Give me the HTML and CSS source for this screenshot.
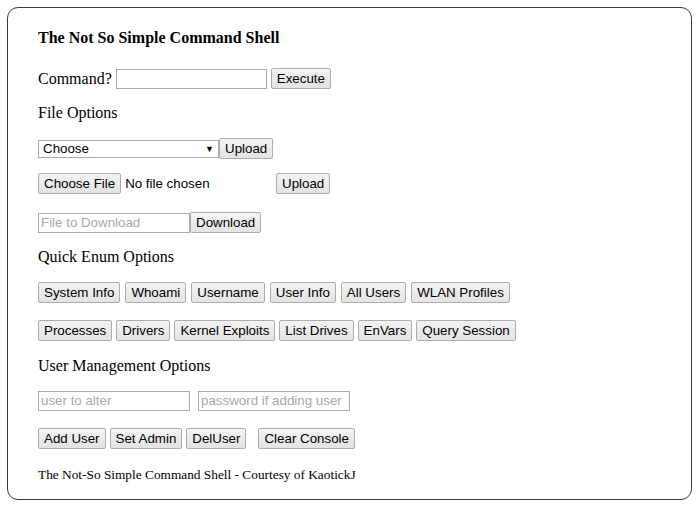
FILE: index.html
```html
<!DOCTYPE html>
<html>
<head>
<meta charset="utf-8">
<link rel="stylesheet" href="styles.css">
</head>
<body>
<div class="shell">
  <div class="title">The Not So Simple Command Shell</div>

  <div class="row r-command">
    <span class="label">Command?</span>
    <input class="field" type="text">
    <button class="btn">Execute</button>
  </div>

  <div class="heading h-file">File Options</div>

  <div class="row tight r-select">
    <div class="select"><span>Choose</span><span class="arrow">&#9660;</span></div>
    <button class="btn">Upload</button>
  </div>

  <div class="row r-choose">
    <div class="file"><button class="btn">Choose File</button><span class="nofile">No file chosen</span></div>
    <button class="btn">Upload</button>
  </div>

  <div class="row tight r-download">
    <input class="field" type="text" placeholder="File to Download">
    <button class="btn">Download</button>
  </div>

  <div class="heading h-enum">Quick Enum Options</div>

  <div class="row r-enum1">
    <button class="btn">System Info</button>
    <button class="btn">Whoami</button>
    <button class="btn">Username</button>
    <button class="btn">User Info</button>
    <button class="btn">All Users</button>
    <button class="btn">WLAN Profiles</button>
  </div>

  <div class="row r-enum2">
    <button class="btn">Processes</button>
    <button class="btn">Drivers</button>
    <button class="btn">Kernel Exploits</button>
    <button class="btn">List Drives</button>
    <button class="btn">EnVars</button>
    <button class="btn">Query Session</button>
  </div>

  <div class="heading h-user">User Management Options</div>

  <div class="row wide r-userin">
    <input class="field" type="text" placeholder="user to alter">
    <input class="field" type="text" placeholder="password if adding user">
  </div>

  <div class="row r-userbtn">
    <button class="btn">Add User</button>
    <button class="btn">Set Admin</button>
    <button class="btn">DelUser</button>
    <button class="btn clear">Clear Console</button>
  </div>

  <div class="footer">The Not-So Simple Command Shell - Courtesy of KaotickJ</div>
</div>
</body>
</html>
```
FILE: styles.css
```css
html, body {
  margin: 0;
  padding: 0;
  background: #ffffff;
}
body {
  padding: 7px;
  font-family: "Liberation Serif", "Times New Roman", serif;
  color: #000;
}
.shell {
  box-sizing: border-box;
  width: 685px;
  height: 493px;
  border: 1px solid #3a3a3a;
  border-radius: 11px;
  padding: 21px 30px 0 30px;
  display: flex;
  flex-direction: column;
  align-items: flex-start;
}
.title {
  font-size: 16px;
  font-weight: bold;
  line-height: 18px;
}
.heading {
  font-size: 16px;
  line-height: 18px;
}
.label {
  font-size: 16px;
  line-height: 18px;
}
.row {
  display: flex;
  align-items: center;
  gap: 4px;
  height: 21px;
}
.row.tight { gap: 0; }
.row.wide { gap: 8px; }
.r-enum1 { gap: 5px; }

.btn {
  box-sizing: border-box;
  height: 21px;
  margin: 0;
  padding: 0 5px;
  font-family: "Liberation Sans", Arial, sans-serif;
  font-size: 13.33px;
  line-height: 15px;
  color: #000;
  background: linear-gradient(#f3f3f3, #e3e3e3);
  border: 1px solid #adadad;
  border-radius: 2px;
  white-space: nowrap;
}
.field {
  box-sizing: border-box;
  width: 152px;
  height: 20px;
  margin: 0;
  padding: 1px 2px;
  font-family: "Liberation Sans", Arial, sans-serif;
  font-size: 13.33px;
  border: 1px solid #a9a9a9;
  background: #fff;
  outline: none;
}
.field::placeholder { color: #a9a9a9; }
.r-command .field { width: 151px; }

.select {
  box-sizing: border-box;
  width: 181px;
  height: 18px;
  border: 1px solid #a9a9a9;
  background: #fff;
  display: flex;
  align-items: center;
  justify-content: space-between;
  padding: 0 4px 0 4px;
  font-family: "Liberation Sans", Arial, sans-serif;
  font-size: 13.33px;
}
.arrow { font-size: 9px; }

.file {
  width: 234px;
  display: flex;
  align-items: center;
  gap: 4px;
}
.nofile {
  font-family: "Liberation Sans", Arial, sans-serif;
  font-size: 13.33px;
}
.clear { margin-left: 8px; }

.footer {
  font-size: 13.33px;
  line-height: 16px;
}

.r-command { margin-top: 21px; }
.h-file { margin-top: 15px; }
.r-select { margin-top: 16px; }
.r-choose { margin-top: 14px; }
.r-download { margin-top: 18px; }
.h-enum { margin-top: 15px; }
.r-enum1 { margin-top: 16px; }
.r-enum2 { margin-top: 17px; }
.h-user { margin-top: 16px; }
.r-userin { margin-top: 15px; }
.r-userbtn { margin-top: 17px; }
.footer { margin-top: 18px; }
```
